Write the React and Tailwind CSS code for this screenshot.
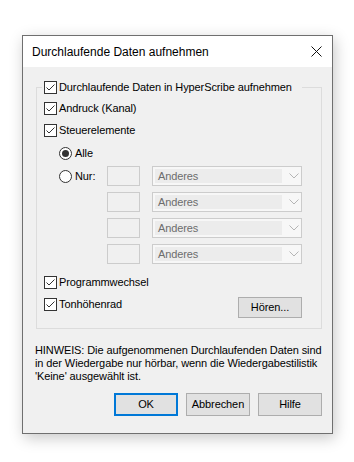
import React from 'react';

const Check = () => (
  <span className="w-[13px] h-[13px] border border-[#333333] bg-white flex-none flex items-center justify-center">
    <svg width="11" height="11" viewBox="0 0 11 11">
      <polyline points="1.5,5.5 4,8 9.5,2.5" fill="none" stroke="#333333" strokeWidth="1" />
    </svg>
  </span>
);

const Radio = ({ on }) => (
  <span className="w-[13px] h-[13px] rounded-full border border-[#333333] bg-white flex-none flex items-center justify-center">
    {on && <span className="w-[7px] h-[7px] rounded-full bg-[#333333]" />}
  </span>
);

const CheckRow = ({ label, className = '' }) => (
  <div className={`h-[20px] flex items-center gap-[2px] ${className}`}>
    <Check />
    <span>{label}</span>
  </div>
);

const Edit = () => <div className="w-[33px] h-[20px] border border-[#cccccc] bg-[#f0f0f0] flex-none" />;

const Combo = () => (
  <div className="w-[150px] h-[20px] border border-[#cccccc] bg-[#f7f7f7] flex items-center flex-none p-[2px]">
    <div className="w-[127px] h-full bg-[#ececec] flex items-center pl-[3px] text-[#6d6d6d]">Anderes</div>
    <svg className="ml-[7px]" width="10" height="6" viewBox="0 0 10 6">
      <polyline points="0.5,0.5 5,5 9.5,0.5" fill="none" stroke="#b5b5b5" strokeWidth="1" />
    </svg>
  </div>
);

const Button = ({ children, def }) => (
  <div
    className={`w-[64px] h-[23px] flex items-center justify-center bg-[#e1e1e1] ${
      def ? 'border-2 border-[#0078d7]' : 'border border-[#adadad]'
    }`}
  >
    {children}
  </div>
);

export default function App() {
  return (
    <div className="w-[354px] h-[462px] bg-white pt-[35px] pl-[22px] font-['Segoe_UI','Liberation_Sans',Arial,sans-serif] text-[11px] tracking-[-0.1px] text-black">
      <div className="w-[311px] h-[399px] border border-[#6f6f6f] bg-[#f0f0f0] flex flex-col shadow-[2px_4px_14px_rgba(0,0,0,0.22)]">
        {/* Title bar */}
        <div className="h-[31px] bg-white flex items-center justify-between pl-[9px] pr-[10px] flex-none">
          <span className="text-[12px] tracking-normal">Durchlaufende Daten aufnehmen</span>
          <svg width="11" height="11" viewBox="0 0 11 11">
            <path d="M0.5 0.5 L10.5 10.5 M10.5 0.5 L0.5 10.5" stroke="#111111" strokeWidth="1" />
          </svg>
        </div>

        {/* Group box */}
        <fieldset className="ml-[13px] mt-[14px] w-[285px] border border-[#dcdcdc] pb-[10px] pl-[7px] pr-[19px]">
          <legend className="ml-[-2px] pl-[2px] pr-[10px]">
            <div className="h-[13px] flex items-center gap-[2px]">
              <Check />
              <span>Durchlaufende Daten in HyperScribe aufnehmen</span>
            </div>
          </legend>
          <CheckRow label="Andruck (Kanal)" className="mt-[4px]" />
          <CheckRow label="Steuerelemente" className="mt-[2px]" />
          <div className="h-[20px] flex items-center gap-[3px] mt-[3px] pl-[15px]">
            <Radio on />
            <span>Alle</span>
          </div>
          <div className="h-[20px] flex items-center mt-[3px] pl-[15px]">
            <Radio />
            <span className="ml-[3px] w-[29px]">Nur:</span>
            <div className="ml-[3px] flex items-center gap-[12px]">
              <Edit />
              <Combo />
            </div>
          </div>
          {[0, 1, 2].map((i) => (
            <div key={i} className="h-[20px] flex items-center gap-[12px] mt-[6px] pl-[63px]">
              <Edit />
              <Combo />
            </div>
          ))}
          <CheckRow label="Programmwechsel" className="mt-[8px]" />
          <div className="flex items-start mt-[2px]">
            <CheckRow label="Tonhöhenrad" />
            <div className="ml-auto mt-[3px] w-[64px] h-[21px] border border-[#adadad] bg-[#e1e1e1] flex items-center justify-center">
              Hören...
            </div>
          </div>
        </fieldset>

        {/* Note */}
        <p className="ml-[12px] mt-[15px] leading-[13px] whitespace-nowrap">
          HINWEIS: Die aufgenommenen Durchlaufenden Daten sind
          <br />
          in der Wiedergabe nur hörbar, wenn die Wiedergabestilistik
          <br />
          'Keine' ausgewählt ist.
        </p>

        {/* Buttons */}
        <div className="mt-[10px] flex justify-end gap-[8px] pr-[10px]">
          <Button def>OK</Button>
          <Button>Abbrechen</Button>
          <Button>Hilfe</Button>
        </div>
      </div>
    </div>
  );
}
